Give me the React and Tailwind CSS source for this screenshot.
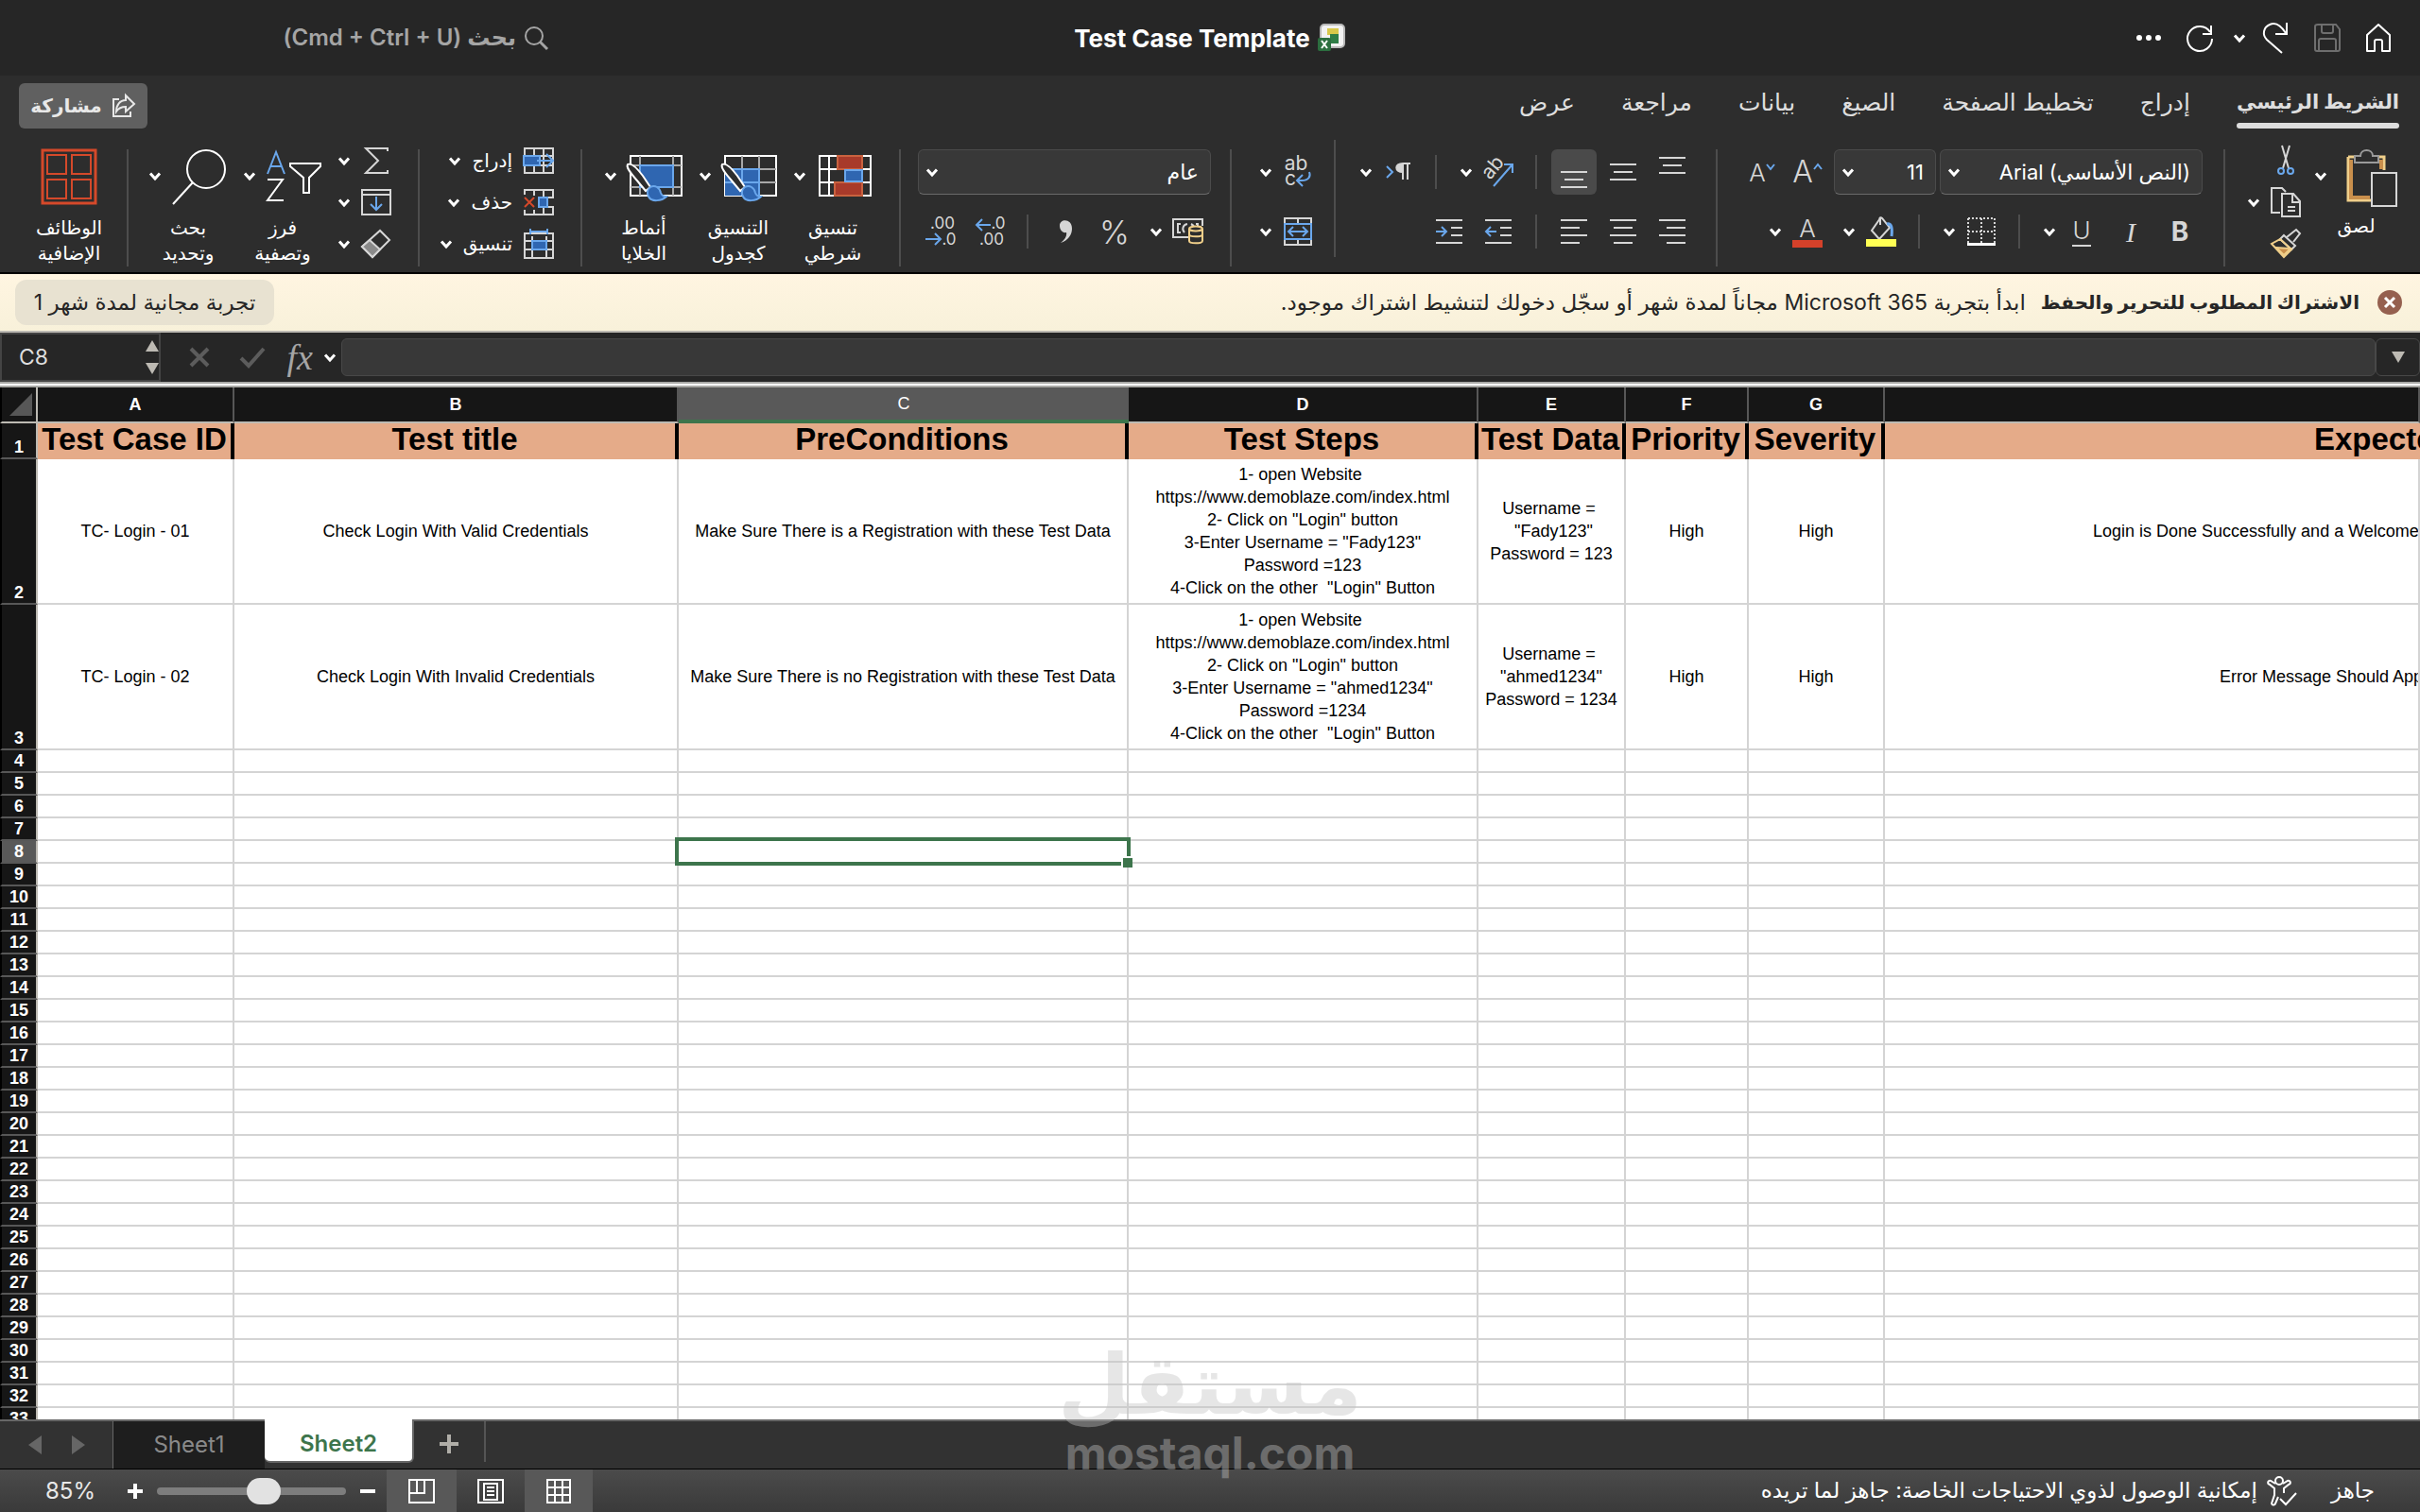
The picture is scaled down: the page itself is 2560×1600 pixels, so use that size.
import React from 'react';

const COLUMNS = [
    { id: 'A', width: 'w-[208px]', title: 'Test Case ID' },
    { id: 'B', width: 'w-[470px]', title: 'Test title' },
    { id: 'C', width: 'w-[476px]', title: 'PreConditions' },
    { id: 'D', width: 'w-[370px]', title: 'Test Steps' },
    { id: 'E', width: 'w-[156px]', title: 'Test Data' },
    { id: 'F', width: 'w-[130px]', title: 'Priority' },
    { id: 'G', width: 'w-[144px]', title: 'Severity' },
];

const CASES = [
    {
        row: 2,
        cells: [
            'TC- Login - 01',
            'Check Login With Valid Credentials',
            'Make Sure There is a Registration with these Test Data',
            '1- open Website \nhttps://www.demoblaze.com/index.html\n2- Click on "Login" button\n3-Enter Username = "Fady123"\nPassword =123\n4-Click on the other  "Login" Button',
            'Username = \n "Fady123"\nPassword = 123',
            'High',
            'High',
        ],
        expected: 'Login is Done Successfully and a Welcome',
        indent: 'pl-[220px]',
    },
    {
        row: 3,
        cells: [
            'TC- Login - 02',
            'Check Login With Invalid Credentials',
            'Make Sure There is no Registration with these Test Data',
            '1- open Website \nhttps://www.demoblaze.com/index.html\n2- Click on "Login" button\n3-Enter Username = "ahmed1234"\nPassword =1234\n4-Click on the other  "Login" Button',
            'Username = \n"ahmed1234"\nPassword = 1234',
            'High',
            'High',
        ],
        expected: 'Error Message Should Appear',
        indent: 'pl-[354px]',
    },
];

const EMPTY_ROWS = Array.from({ length: 30 }, (_, i) => i + 4);

const TABS = ['الشريط الرئيسي', 'إدراج', 'تخطيط الصفحة', 'الصيغ', 'بيانات', 'مراجعة', 'عرض'];

const BLUE = '#6aa7ec';
const FILL = '#2f66b1';

function Svg({ w, h, sw = 2, children, className = '' }) {
    return (
        <svg width={w} height={h} viewBox={`0 0 ${w} ${h}`} fill="none" stroke="currentColor" strokeWidth={sw} className={`shrink-0 overflow-visible ${className}`} aria-hidden="true">
            {children}
        </svg>
    );
}

const Chevron = ({ className = '' }) => <Svg w={12} h={9} sw={3} className={className}><path d="M1 1.5l5 5.5 5-5.5" /></Svg>;

/* Ribbon building blocks */

function Slot({ label, active, children }) {
    return (
        <button aria-label={label} className="flex h-12 w-13 shrink-0 items-center justify-center text-[#d6d6d6]">
            {active ? <span className="flex h-12 w-12 items-center justify-center rounded-md bg-[#4a4a4a]">{children}</span> : children}
        </button>
    );
}

function More({ label }) {
    return (
        <button aria-label={label} className="flex h-12 w-[26px] shrink-0 items-center justify-start ps-[2px] text-white">
            <Chevron />
        </button>
    );
}

const Split = () => <div className="flex w-7 shrink-0 justify-center"><div className="h-9 w-[2px] bg-[#4d4d4d]" /></div>;

const Divider = ({ className = 'self-end' }) => <div className={`h-[124px] w-[2px] shrink-0 bg-[#4d4d4d] ${className}`} />;

const Rows = ({ className, children }) => <div className={`flex shrink-0 flex-col gap-[15px] self-end pb-[13px] ${className}`}>{children}</div>;

const Row = ({ children }) => <div className="flex h-12 items-center">{children}</div>;

function BigButton({ lines, icon, more = true }) {
    return (
        <button className="flex w-[82px] shrink-0 flex-col items-center self-end text-white">
            <span className={`flex h-[70px] w-full items-start ${more ? 'justify-between' : 'justify-center'}`}>
                {icon}
                {more && <Chevron className="mt-6" />}
            </span>
            <span className="flex h-[54px] flex-col whitespace-nowrap text-[20px] leading-[27px] font-medium">
                {lines.map(line => <span key={line}>{line}</span>)}
            </span>
        </button>
    );
}

function SmallButton({ icon, label, name, more = true }) {
    return (
        <button aria-label={name} className="flex h-11 items-center gap-3 text-white">
            <span className="flex w-8 justify-center text-[#d6d6d6]">{icon}</span>
            {label && <span className="text-[20px] font-medium">{label}</span>}
            {more && <Chevron />}
        </button>
    );
}

function Dropdown({ label, value, width }) {
    return (
        <label className={`relative flex h-12 items-center rounded-md border border-[#4b4b4b] border-b-[#6a6a6a] bg-[#383838] ${width}`}>
            <select aria-label={label} defaultValue={value} className="h-full w-full appearance-none bg-transparent ps-3 pe-7 text-[22px] text-white">
                <option>{value}</option>
            </select>
            <Chevron className="pointer-events-none absolute left-2 text-white" />
        </label>
    );
}

/* Lines of a paragraph: each entry is [x1, x2] */
function Lines({ rows, gap = 8, h = 28 }) {
    return (
        <Svg w={28} h={h}>
            {rows.map(([a, b], i) => <path key={i} d={`M${a} ${1 + i * gap}H${b}`} />)}
        </Svg>
    );
}

const FULL = [0, 28];

function DecimalIcon({ top, bottom, arrow }) {
    return (
        <Svg w={32} h={32}>
            <g fill="currentColor" stroke="none" fontSize="17" textAnchor="middle" fontFamily="Inter" direction="ltr">
                <text x={top.length > 2 ? 18 : 25} y="13">{top}</text>
                <text x={bottom.length > 2 ? 18 : 25} y="30">{bottom}</text>
            </g>
            <path d={arrow} stroke={BLUE} />
        </Svg>
    );
}

const BrushIcon = () => (
    <>
        <path d="M2 16c4-2 10 4 16 12l8 12-5 4-10-12C5 25 0 19 2 16z" fill="#2d2d2d" />
        <path d="M26 40c5-3 10 1 11 6 1 3 3 4 6 4-5 5-16 6-19 0-2-4-1-8 2-10z" fill={FILL} stroke={BLUE} />
    </>
);

function TitleBar() {
    return (
        <header className="grid h-20 grid-cols-3 items-center bg-[#262626]">
            <div className="flex items-center ps-[30px] text-white">
                <button aria-label="الصفحة الرئيسية"><Svg w={28} h={32}><path d="M2 13L14 2l12 11v17h-8V20q0-2-2-2h-4q-2 0-2 2v10H2z" strokeLinejoin="round" /></Svg></button>
                <button aria-label="حفظ" className="ms-[26px] text-[#6e6e6e]"><Svg w={28} h={30}><path d="M4 1h19l4 5v21q0 2-2 2H3q-2 0-2-2V3q0-2 3-2zM8 1v7q0 2 2 2h8q2 0 2-2V1M5 29V18q0-2 2-2h14q2 0 2 2v11" /></Svg></button>
                <button aria-label="تراجع" className="ms-[27px]"><Svg w={28} h={34}><path d="M26 1v12H14M25 12C20 4 14 0 8 3 1 6 0 14 5 19l16 14" /></Svg></button>
                <button aria-label="خيارات التراجع" className="ms-[18px]"><Chevron /></button>
                <button aria-label="إعادة" className="ms-[21px]"><Svg w={30} h={30}><path d="M27 2v9h-9M26 9A13 13 0 1 0 28 16" /></Svg></button>
                <button aria-label="المزيد" className="ms-[26px]"><Svg w={26} h={6}><g fill="currentColor" stroke="none"><circle cx="3" cy="3" r="3" /><circle cx="13" cy="3" r="3" /><circle cx="23" cy="3" r="3" /></g></Svg></button>
            </div>
            <div className="flex items-center justify-center gap-2">
                <Svg w={30} h={30}>
                    <rect x="3" y="1" width="25" height="24" rx="4" fill="#f2f2f2" stroke="#b8b8b8" />
                    <rect x="10" y="5" width="12" height="7" fill="#d8c84a" stroke="none" />
                    <rect x="13" y="11" width="9" height="10" fill="#2f7d46" stroke="none" />
                    <rect x="0" y="15" width="14" height="14" rx="2" fill="#2c6e3f" stroke="none" />
                    <path d="M4 18l6 8M10 18l-6 8" stroke="#fff" />
                </Svg>
                <h1 dir="ltr" className="text-[26px] font-bold text-white">Test Case Template</h1>
            </div>
            <div dir="ltr" className="ps-[296px]">
                <label dir="rtl" className="flex w-[284px] items-center gap-2 text-[#a5a5a5]">
                    <Svg w={26} h={26}><circle cx="11" cy="11" r="9" /><path d="M17 17l8 8" strokeWidth="3" /></Svg>
                    <input aria-label="بحث" placeholder="بحث (Cmd + Ctrl + U)" className="w-full bg-transparent text-[24px] font-semibold outline-none placeholder:text-[#a5a5a5]" />
                </label>
            </div>
        </header>
    );
}

function TabStrip() {
    return (
        <div className="flex h-[68px] items-start justify-between ps-[22px] pe-5 pt-2">
            <nav className="flex gap-[49px]">
                {TABS.map((tab, i) => (
                    <button key={tab} className={`flex h-12 flex-col items-center justify-between leading-[40px] whitespace-nowrap text-[#dedede] ${i === 0 ? 'text-[21px] font-bold' : 'text-[25px]'}`}>
                        {tab}
                        {i === 0 && <span className="h-[6px] w-full shrink-0 rounded-full bg-[#dedede]" />}
                    </button>
                ))}
            </nav>
            <button className="flex h-12 w-[136px] items-center justify-center gap-[10px] rounded-md bg-[#606060] text-[20px] font-semibold text-[#e8e8e8]">
                <Svg w={26} h={26}><path d="M8 6H2v18h18v-5" /><path d="M15 2l9 9-9 8v-5c-5 0-8 2-10 5 0-7 4-12 10-12z" /></Svg>
                مشاركة
            </button>
        </div>
    );
}

function Ribbon() {
    return (
        <div className="flex h-[134px] items-stretch ps-6">
            <button className="flex shrink-0 flex-col self-end text-white">
                <span className="flex h-[70px] w-[87px] items-start justify-between">
                    <Svg w={54} h={62}>
                        <path d="M2 8h38v14M2 8v46h24" stroke="#f0cf8a" strokeWidth="3" />
                        <path d="M5 11v40h20M37 11v10" stroke="#c98f4c" strokeWidth="4" />
                        <path d="M9 14V7h6c0-8 13-8 13 0h6v7z" fill="#2d2d2d" stroke="#9a9a9a" />
                        <rect x="27" y="25" width="26" height="35" fill="#2d2d2d" stroke="#d6d6d6" />
                    </Svg>
                    <Chevron className="mt-6" />
                </span>
                <span className="h-[54px] w-full text-center text-[20px] leading-[22px] font-medium">لصق</span>
            </button>
            <div className="flex w-[71px] shrink-0 flex-col self-start ps-[15px]">
                <SmallButton name="قص" more={false} icon={<Svg w={20} h={32}><path d="M6 0l7 24M14 0L7 24" /><g stroke={BLUE}><circle cx="5" cy="27" r="3" /><circle cx="15" cy="27" r="3" /></g></Svg>} />
                <SmallButton name="نسخ" icon={<Svg w={32} h={32}><path d="M10 27H1V1h11l4 4M12 7h12l7 8v16H12zM23 7v9h8" /><path d="M18 21h8M18 25h8" /></Svg>} />
                <SmallButton name="نسخ التنسيق" more={false} icon={<Svg w={32} h={32}><path d="M17 9l10-8 4 4-7 9" /><path d="M14 7l12 11-4 4L10 11z" /><path d="M10 11L1 16l13 14 8-8z" stroke="#f0cf8a" /><path d="M6 20l15 1-7 7z" fill="#c98f4c" stroke="#f0cf8a" /></Svg>} />
            </div>
            <div className="w-6 shrink-0" />
            <Divider />

            <Rows className="ps-5 pe-[27px]">
                <div className="flex h-12 items-center ps-[2px]">
                    <Dropdown label="الخط" value="(النص الأساسي) Arial" width="w-[278px]" />
                    <div className="w-1" />
                    <Dropdown label="حجم الخط" value="11" width="w-[108px]" />
                    <button aria-label="تكبير الخط" className="ms-2 flex w-10 items-center justify-center text-[#d6d6d6]">
                        <Svg w={10} h={24}><path d="M1 9l4-5 4 5" stroke={BLUE} /></Svg>
                        <span className="text-[32px] font-light">A</span>
                    </button>
                    <button aria-label="تصغير الخط" className="ms-2 flex w-10 items-center justify-center text-[#d6d6d6]">
                        <Svg w={10} h={24}><path d="M1 4l4 5 4-5" stroke={BLUE} /></Svg>
                        <span className="text-[26px] font-light">A</span>
                    </button>
                </div>
                <Row>
                    <Slot label="غامق"><span className="text-[28px] font-bold">B</span></Slot>
                    <Slot label="مائل"><span className="font-['Liberation_Serif'] text-[30px] italic">I</span></Slot>
                    <Slot label="تسطير"><span className="h-8 border-b-2 border-[#d6d6d6] text-[26px] leading-[30px] font-light">U</span></Slot>
                    <More label="خيارات التسطير" />
                    <Split />
                    <Slot label="حدود"><Svg w={30} h={30}><path d="M1 1h28M1 1v26M29 1v26M15 1v26M1 15h28" strokeDasharray="2 2" /><path d="M0 28.500h30" stroke="#fff" strokeWidth="3" /></Svg></Slot>
                    <More label="خيارات الحدود" />
                    <Split />
                    <Slot label="لون التعبئة"><Svg w={32} h={34}><path d="M15 2v8M15 3l-9 13 8 9 11-12L17 3q-2-2-3 1" /><path d="M22 9c5-1 6 4 5 13" stroke={BLUE} strokeWidth="3" /><rect x="0" y="25" width="32" height="8" fill="#ffff54" stroke="none" /></Svg></Slot>
                    <More label="خيارات التعبئة" />
                    <Slot label="لون الخط"><span className="flex w-8 flex-col items-center text-[26px] leading-[25px] font-light">A<span className="h-2 w-full bg-[#d4412a]" /></span></Slot>
                    <More label="خيارات لون الخط" />
                </Row>
            </Rows>
            <Divider />

            <Rows className="ps-5 pe-[14px]">
                <Row>
                    <Slot label="محاذاة للأعلى"><Lines rows={[FULL, [4, 24], FULL]} gap={8} h={32} /></Slot>
                    <Slot label="محاذاة للوسط"><Lines rows={[FULL, [4, 24], FULL]} gap={8} h={18} /></Slot>
                    <Slot label="محاذاة للأسفل" active><span className="pt-4"><Lines rows={[FULL, [4, 24], FULL]} gap={8} h={18} /></span></Slot>
                    <Split />
                    <Slot label="الاتجاه">
                        <Svg w={34} h={34}>
                            <text x="13" y="18" fontSize="21" fill="currentColor" stroke="none" textAnchor="middle" transform="rotate(-50 13 14)">ab</text>
                            <path d="M12 32L32 9M23 9h9v9" stroke={BLUE} />
                        </Svg>
                    </Slot>
                    <More label="خيارات الاتجاه" />
                    <Split />
                    <Slot label="اتجاه النص"><Svg w={26} h={20}><path d="M1 4l6 6-6 6" stroke={BLUE} /><path d="M18 1v17M23 1v17M26 1h-8" /><path d="M18 1c-9 0-9 9 0 9z" fill="currentColor" /></Svg></Slot>
                    <More label="خيارات اتجاه النص" />
                </Row>
                <Row>
                    <Slot label="محاذاة لليمين"><Lines rows={[FULL, [8, 28], FULL, [8, 28]]} h={26} /></Slot>
                    <Slot label="توسيط"><Lines rows={[FULL, [4, 24], FULL, [4, 24]]} h={26} /></Slot>
                    <Slot label="محاذاة لليسار"><Lines rows={[FULL, [0, 20], FULL, [0, 20]]} h={26} /></Slot>
                    <Split />
                    <Slot label="إنقاص المسافة البادئة"><Svg w={28} h={26}><path d="M0 1h28M16 9h12M16 17h12M0 25h28" /><path d="M12 13H1M6 8l-5 5 5 5" stroke={BLUE} /></Svg></Slot>
                    <Slot label="زيادة المسافة البادئة"><Svg w={28} h={26}><path d="M0 1h28M16 9h12M16 17h12M0 25h28" /><path d="M0 13h11M6 8l5 5-5 5" stroke={BLUE} /></Svg></Slot>
                </Row>
            </Rows>
            <Divider className="self-start" />

            <Rows className="ps-3 pe-[18px]">
                <Row>
                    <Slot label="التفاف النص">
                        <Svg w={30} h={34}>
                            <g fill="currentColor" stroke="none" fontSize="21" textAnchor="middle"><text x="13" y="15">ab</text><text x="7" y="31">c</text></g>
                            <path d="M27 17c2 5-1 9-8 9h-5M20 20l-6 6 6 6" stroke={BLUE} />
                        </Svg>
                    </Slot>
                    <More label="خيارات الالتفاف" />
                </Row>
                <Row>
                    <Slot label="دمج وتوسيط"><Svg w={30} h={30}><path d="M1 7V1h28v6M1 23v6h28v-6M15 1v6M15 23v6" /><path d="M1 7h28v16H1zM5 15h20M10 10l-5 5 5 5M20 10l5 5-5 5" stroke={BLUE} /></Svg></Slot>
                    <More label="خيارات الدمج" />
                </Row>
            </Rows>
            <Divider />

            <Rows className="ps-[18px] pe-4">
                <div className="flex h-12 ps-[2px]"><Dropdown label="تنسيق الأرقام" value="عام" width="w-[310px]" /></div>
                <Row>
                    <Slot label="تنسيق العملة">
                        <Svg w={34} h={28}>
                            <path d="M17 20H1V1h31v7" /><path d="M9 6H6v9h3M13 15c-3-3-2-8 3-9M20 6c2 1 3 2 3 4M25 6h2v3" />
                            <g stroke="#f0cf8a" fill="#2d2d2d"><path d="M18 11v13c0 3 14 3 14 0V11" /><path d="M18 17c0 3 14 3 14 0" /><ellipse cx="25" cy="11" rx="7" ry="2.500" /></g>
                        </Svg>
                    </Slot>
                    <More label="خيارات العملة" />
                    <Slot label="نمط النسبة المئوية"><span className="text-[34px] font-light">%</span></Slot>
                    <Slot label="نمط الفاصلة"><Svg w={16} h={26}><path d="M2 7c0-8 13-8 13 3 0 7-5 13-12 15 4-3 7-7 6-11-4 1-7-3-7-7z" fill="currentColor" stroke="none" /></Svg></Slot>
                    <Split />
                    <Slot label="زيادة المنازل العشرية"><DecimalIcon top=".0" bottom=".00" arrow="M17 9H2M8 3L2 9l6 6" /></Slot>
                    <Slot label="إنقاص المنازل العشرية"><DecimalIcon top=".00" bottom=".0" arrow="M0 24h16M10 18l6 6-6 6" /></Slot>
                </Row>
            </Rows>
            <Divider />

            <div className="flex shrink-0 gap-[18px] ps-[29px] pe-6">
                <BigButton lines={['تنسيق', 'شرطي']} icon={
                    <Svg w={56} h={52}>
                        <path d="M1 7h54v42H1zM11 7v42M46 7v42M1 21h54M1 35h54" />
                        <path d="M20 7h26v14H20zM17 35h29v14H17z" fill="#a83a2a" stroke="#c9623f" />
                        <path d="M28 22h18v12H28z" fill={FILL} stroke={BLUE} />
                    </Svg>
                } />
                <BigButton lines={['التنسيق', 'كجدول']} icon={
                    <Svg w={60} h={62}>
                        <path d="M5 7h54v42H5z" /><path d="M5 21h54M5 35h54M23 7v42M41 7v42" stroke="#a8a8a8" />
                        <path d="M5 21h36v28H5z" fill={FILL} stroke="none" /><path d="M23 21v28M5 35h36M5 21h36v28" stroke={BLUE} />
                        <BrushIcon />
                    </Svg>
                } />
                <BigButton lines={['أنماط', 'الخلايا']} icon={
                    <Svg w={60} h={62}>
                        <path d="M5 7h54v42H5z" /><path d="M5 17h54M5 40h54M15 7v42M50 7v42" stroke="#a8a8a8" />
                        <path d="M15 17h35v23H15z" fill={FILL} stroke={BLUE} />
                        <BrushIcon />
                    </Svg>
                } />
            </div>
            <Divider />

            <div className="flex w-[170px] shrink-0 flex-col self-start ps-7">
                <SmallButton label="إدراج" icon={<Svg w={32} h={28}><path d="M1 1h30v26H1zM11 1v26M21 1v26M1 9h30M1 19h30" /><path d="M0 9h17v10H0z" fill={FILL} stroke={BLUE} /><path d="M14 14h16M24 7l7 7-7 7" stroke={BLUE} /></Svg>} />
                <SmallButton label="حذف" icon={<Svg w={32} h={28}><path d="M1 6V1h30v8H17M1 22v5h30v-8H17M11 1v6M21 1v8M11 22v5M21 19v8" /><path d="M16 9h9v10h-9z" fill={FILL} stroke={BLUE} /><path d="M1 9l10 10M11 9L1 19" stroke="#d5492a" /></Svg>} />
                <SmallButton label="تنسيق" icon={<Svg w={32} h={32}><path d="M1 5h30v26H1zM9 8v23M24 8v23M1 13h30M1 22h30" /><path d="M9 13h15v9H9z" fill={FILL} stroke={BLUE} /><path d="M7 3h18M7 0v6M25 0v6" stroke={BLUE} /></Svg>} />
            </div>
            <Divider />

            <div className="flex shrink-0 gap-[18px] ps-7 pe-[22px]">
                <div className="flex w-14 shrink-0 flex-col self-start">
                    <SmallButton name="جمع تلقائي" icon={<Svg w={26} h={28}><path d="M25 4V1H2l13 13L2 27h23v-3" /></Svg>} />
                    <SmallButton name="تعبئة" icon={<Svg w={32} h={28}><path d="M1 1h30v26H1zM1 6h30" /><path d="M16 8v14M10 16l6 6 6-6" stroke={BLUE} /></Svg>} />
                    <SmallButton name="مسح" icon={<Svg w={32} h={32}><path d="M1 19L20 2l10 10-18 18z" /><path d="M1 19l8-7 11 10-8 8z" fill="#8a8a8a" /></Svg>} />
                </div>
                <BigButton lines={['فرز', 'وتصفية']} icon={
                    <Svg w={58} h={58}>
                        <path d="M1 26L10 3l9 23M4 18h12" stroke={BLUE} /><path d="M1 32h16L1 54h17" />
                        <path d="M25 15h32v3L45 30v16h-6V30L25 18z" />
                    </Svg>
                } />
                <BigButton lines={['بحث', 'وتحديد']} icon={<Svg w={58} h={60}><circle cx="36" cy="21" r="20" /><path d="M22 35L1 58" /></Svg>} />
            </div>
            <Divider />

            <div className="flex ps-5">
                <BigButton more={false} lines={['الوظائف', 'الإضافية']} icon={
                    <Svg w={58} h={58}><g stroke="#d5492a"><path d="M1 1h56v56H1z" strokeWidth="3" /><path d="M6 6h20v20H6zM32 6h20v20H32zM6 32h20v20H6zM32 32h20v20H32z" /></g></Svg>
                } />
            </div>
        </div>
    );
}

function TrialBanner() {
    return (
        <div className="flex h-[64px] items-center justify-between border-t-2 border-b-2 border-t-black border-b-[#bdbab3] bg-linear-to-b from-[#fff5e1] to-[#f8f1da] ps-[18px] pe-4 text-[23px] text-[#262626]">
            <div className="flex items-center whitespace-nowrap">
                <button aria-label="إغلاق"><Svg w={28} h={28}><circle cx="14" cy="14" r="13" fill="#95604f" stroke="none" /><path d="M9 9l10 10M19 9L9 19" stroke="#fff" strokeWidth="3" /></Svg></button>
                <strong className="ms-[18px] text-[20px]">الاشتراك المطلوب للتحرير والحفظ</strong>
                <span className="ms-4">ابدأ بتجربة Microsoft 365 مجاناً لمدة شهر أو سجّل دخولك لتنشيط اشتراك موجود.</span>
            </div>
            <button className="h-12 w-[274px] rounded-xl bg-[#e8e2d1] whitespace-nowrap">تجربة مجانية لمدة شهر 1</button>
        </div>
    );
}

function FormulaBar() {
    return (
        <div className="flex h-[52px] items-center bg-[#262626]">
            <div className="flex h-[52px] w-[170px] shrink-0 items-center justify-between border-2 border-[#444] ps-[18px]">
                <input aria-label="Name Box" defaultValue="C8" className="w-24 bg-transparent text-[23px] text-[#dedede] outline-none" />
                <div className="flex flex-col gap-3 text-[#bdbab3]">
                    <button aria-label="Previous"><Svg w={14} h={12}><path d="M7 0l7 12H0z" fill="currentColor" stroke="none" /></Svg></button>
                    <button aria-label="Next"><Svg w={14} h={12}><path d="M7 12L0 0h14z" fill="currentColor" stroke="none" /></Svg></button>
                </div>
            </div>
            <div className="flex w-[191px] shrink-0 items-center justify-between ps-[30px] pe-[6px] text-[#5c5c5c]">
                <button aria-label="Cancel"><Svg w={22} h={22} sw={4}><path d="M2 2l18 18M20 2L2 20" /></Svg></button>
                <button aria-label="Enter" className="ps-2"><Svg w={28} h={22} sw={4}><path d="M2 12l8 8L26 2" /></Svg></button>
                <button className="flex items-center gap-3 font-['Liberation_Serif'] text-[38px] leading-[40px] text-[#a5a5a5] italic">
                    fx
                    <Chevron className="text-white" />
                </button>
            </div>
            <input aria-label="Formula" className="h-10 min-w-0 flex-1 rounded-md border border-[#484848] bg-[#383838] px-3 text-[22px] text-white outline-none" />
            <button aria-label="Expand" className="flex h-10 w-[47px] shrink-0 items-center justify-center rounded-md border border-[#484848] text-[#bdbab3]">
                <Svg w={14} h={12}><path d="M7 12L0 0h14z" fill="currentColor" stroke="none" /></Svg>
            </button>
        </div>
    );
}

const HEAD_CELL = 'border-r-2 border-b-2 border-r-[#575757] border-b-[#bdbab3] bg-[#161616] font-semibold text-white';
const ROW_HEAD = 'border-r-2 border-b-2 border-l-2 border-l-black border-r-[#bdbab3] border-b-[#575757] p-0 text-center align-bottom font-semibold text-white';
const GRID_CELL = 'relative border-r-2 border-b-2 border-[#d4d4d4] p-0';
const TITLE_CELL = 'bg-[#e5ab89] p-0 align-top text-[33px] leading-[34px] font-bold whitespace-nowrap';

function Sheet() {
    return (
        <div className="min-h-0 flex-1 overflow-hidden bg-white font-['Liberation_Sans',Arial,sans-serif] text-[18px] leading-[22px] text-black">
            <table className="w-full table-fixed border-separate border-spacing-0">
                <colgroup>
                    <col className="w-10" />
                    {COLUMNS.map(col => <col key={col.id} className={col.width} />)}
                    <col />
                </colgroup>
                <thead>
                    <tr className="h-[38px]">
                        <th aria-label="Select all" className="border-r-2 border-b-2 border-l-2 border-[#bdbab3] border-l-black bg-[#161616] p-0">
                            <Svg w={24} h={24} className="ms-2"><path d="M24 0v24H0z" fill="#575757" stroke="none" /></Svg>
                        </th>
                        {COLUMNS.map(col => (
                            <th key={col.id} className={col.id === 'C' ? 'border-b-4 border-[#3d754c] bg-[#595959] font-normal text-white' : HEAD_CELL}>{col.id}</th>
                        ))}
                        <th className={HEAD_CELL} />
                    </tr>
                </thead>
                <tbody>
                    <tr className="h-[38px]">
                        <th className={`${ROW_HEAD} bg-[#161616]`}>1</th>
                        {COLUMNS.map(col => (
                            <td key={col.id} className={`${TITLE_CELL} border-r-4 border-black text-center`}>{col.title}</td>
                        ))}
                        <td className={`${TITLE_CELL} overflow-hidden pl-[454px]`}>Expected</td>
                    </tr>
                    {CASES.map(item => (
                        <tr key={item.row} className="h-[154px]">
                            <th className={`${ROW_HEAD} bg-[#161616]`}>{item.row}</th>
                            {item.cells.map((text, i) => (
                                <td key={i} className={`${GRID_CELL} text-center leading-[24px] whitespace-pre`}>{text}</td>
                            ))}
                            <td className={`${GRID_CELL} overflow-hidden whitespace-nowrap ${item.indent}`}>{item.expected}</td>
                        </tr>
                    ))}
                    {EMPTY_ROWS.map(row => (
                        <tr key={row} className="h-6">
                            <th className={`${ROW_HEAD} ${row === 8 ? 'border-r-[#3d754c] bg-[#595959]' : 'bg-[#161616]'}`}>{row}</th>
                            {COLUMNS.map(col => (
                                <td key={col.id} className={GRID_CELL}>
                                    {row === 8 && col.id === 'C' && (
                                        <div className="absolute -top-1 -right-1 -bottom-1 -left-1 z-10 border-4 border-[#3d754c]">
                                            <div className="absolute -right-[6px] -bottom-[6px] h-3 w-3 border-t-2 border-l-2 border-white bg-[#3d754c]" />
                                        </div>
                                    )}
                                </td>
                            ))}
                            <td className={GRID_CELL} />
                        </tr>
                    ))}
                </tbody>
            </table>
        </div>
    );
}

function SheetTabs() {
    return (
        <div className="flex h-[53px] shrink-0 border-t-2 border-b border-t-[#666] border-b-black bg-[#323232] text-[24px]">
            <div className="flex w-[120px] items-center gap-8 border-r border-[#666] ps-[30px] text-[#666]">
                <button aria-label="Previous sheet"><Svg w={14} h={20}><path d="M14 0v20L0 10z" fill="currentColor" stroke="none" /></Svg></button>
                <button aria-label="Next sheet"><Svg w={14} h={20}><path d="M0 0v20l14-10z" fill="currentColor" stroke="none" /></Svg></button>
            </div>
            <button className="w-[160px] bg-[#1e1e1e] text-[#8a8a8a]">Sheet1</button>
            <button className="-mt-[2px] h-[46px] w-[158px] rounded-b-md border-r-2 border-b-2 border-[#666] bg-white pt-2 font-semibold text-[#3d754c]">Sheet2</button>
            <button aria-label="Add sheet" className="flex h-[43px] w-[76px] items-center justify-center border-r-2 border-[#555] pt-1 text-[#b0aea8]"><Svg w={20} h={20} sw={4}><path d="M10 0v20M0 10h20" /></Svg></button>
        </div>
    );
}

function StatusBar() {
    return (
        <footer className="flex h-[45px] shrink-0 items-center justify-between bg-linear-to-b from-[#4b4b4b] to-[#3a3a3a] text-white">
            <div className="flex h-full items-center">
                <span className="ms-12 w-[87px] text-[24px] text-[#e8e8e8]">85%</span>
                <button aria-label="Zoom in"><Svg w={16} h={16} sw={4}><path d="M8 0v16M0 8h16" /></Svg></button>
                <input type="range" aria-label="Zoom" dir="rtl" min="0" max="100" defaultValue="42" className="mx-[15px] h-2 w-[200px] appearance-none rounded-full bg-[#7d7d7d] [&::-webkit-slider-thumb]:h-7 [&::-webkit-slider-thumb]:w-9 [&::-webkit-slider-thumb]:appearance-none [&::-webkit-slider-thumb]:rounded-full [&::-webkit-slider-thumb]:bg-[#e2e2e2]" />
                <button aria-label="Zoom out"><Svg w={16} h={16} sw={4}><path d="M0 8h16" /></Svg></button>
                <button aria-label="Page break preview" className="ms-3 flex h-full w-[74px] items-center justify-center bg-[#585858]"><Svg w={28} h={26}><path d="M1 1h26v24H1zM1 15h16V1M9 1v14" /></Svg></button>
                <button aria-label="Page layout" className="flex h-full w-[72px] items-center justify-center"><Svg w={28} h={26}><path d="M1 1h26v24H1zM7 5h14v17H7zM10 9h8M10 13h8M10 17h8" /></Svg></button>
                <button aria-label="Normal view" className="flex h-full w-[72px] items-center justify-center bg-[#585858]"><Svg w={26} h={26}><path d="M1 1h24v24H1zM9 1v24M17 1v24M1 9h24M1 17h24" /></Svg></button>
            </div>
            <div dir="rtl" className="flex items-center ps-12 text-[23px] whitespace-nowrap">
                <span>جاهز</span>
                <button className="ms-9 flex items-center gap-[10px]">
                    <Svg w={32} h={32}><circle cx="13" cy="5" r="4" /><path d="M9 8L4 5C1 4 0 8 3 9l5 4v7l-3 9c1 3 4 1 4 0l3-7M17 8l5-3c3-1 4 3 1 4l-5 4v5" /><path d="M14 24l6 6L31 18" /></Svg>
                    إمكانية الوصول لذوي الاحتياجات الخاصة: جاهز لما تريده
                </button>
            </div>
        </footer>
    );
}

function Watermark() {
    return (
        <div className="pointer-events-none absolute right-0 bottom-8 left-0 z-20 flex flex-col items-center font-bold text-[#c3c3c3] opacity-40">
            <span dir="rtl" className="text-[88px] leading-[88px]">مستقل</span>
            <span className="text-[48px] leading-[60px]">mostaql.com</span>
        </div>
    );
}

export default function App() {
    return (
        <div className="relative flex h-screen flex-col overflow-hidden bg-[#2d2d2d] font-[Inter,'DejaVu_Sans',sans-serif]">
            <div dir="rtl" className="shrink-0">
                <TitleBar />
                <TabStrip />
                <Ribbon />
                <div className="h-[6px]" />
                <TrialBanner />
            </div>
            <FormulaBar />
            <div className="h-[6px] shrink-0 border-t-2 border-b-2 border-[#a9a9a6] bg-white" />
            <Sheet />
            <SheetTabs />
            <StatusBar />
            <Watermark />
        </div>
    );
}
